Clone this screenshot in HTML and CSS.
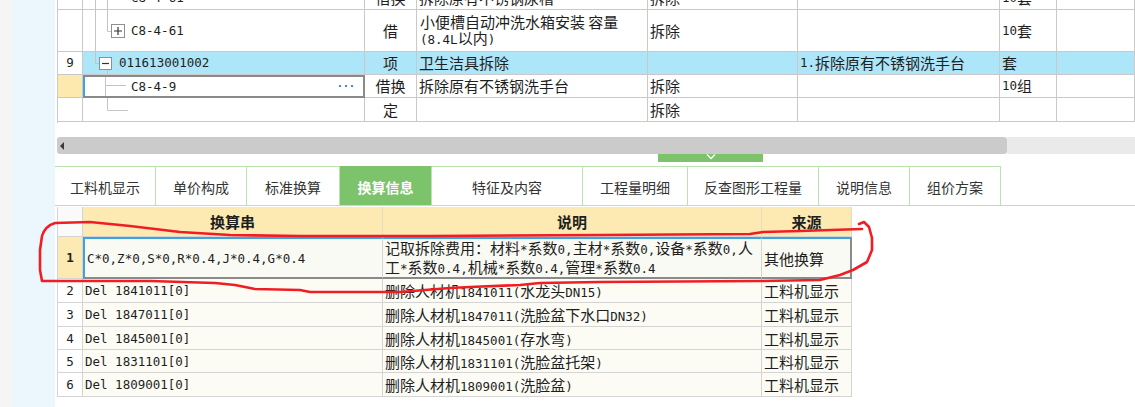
FILE: index.html
```html
<!DOCTYPE html>
<html lang="zh-CN">
<head>
<meta charset="utf-8">
<title>换算信息</title>
<link rel="stylesheet" href="styles.css">
</head>
<body>
<div class="page">
  <div class="side"></div>
  <div class="main">
    <div class="top">
      <div class="trow cut">
        <div class="num"></div>
        <div class="tree">
          <svg class="lines" width="282" height="23"><path d="M12.5 0V23M24.5 0V23" stroke="#c4c4c4" fill="none"/></svg>
          <span class="m code c2">C8-4-61</span>
        </div>
        <div class="typ">借换</div>
        <div>拆除原有不锈钢尿槽</div>
        <div>拆除</div>
        <div></div>
        <div><span class="m">10</span>套</div>
        <div></div>
      </div>
      <div class="trow tall">
        <div class="num"></div>
        <div class="tree">
          <svg class="lines" width="282" height="42"><path d="M12.5 0V42M24.5 0V21.5H28" stroke="#c4c4c4" fill="none"/><rect x="28.5" y="14.5" width="13" height="13" fill="#fff" stroke="#8f8f8f"/><path d="M31 21h8M35 17v8" stroke="#333" stroke-width="1.2"/></svg>
          <span class="m code c2">C8-4-61</span>
        </div>
        <div class="typ">借</div>
        <div class="two"><span class="t">小便槽自动冲洗水箱安装 容量<br><span class="m">(8.4L</span>以内<span class="m">)</span></span></div>
        <div>拆除</div>
        <div></div>
        <div><span class="m">10</span>套</div>
        <div></div>
      </div>
      <div class="trow hl">
        <div class="num"><span class="m">9</span></div>
        <div class="tree">
          <svg class="lines" width="282" height="23"><path d="M12.5 0V11.5H16M24.5 18V23" stroke="#c4c4c4" fill="none"/><rect x="16.5" y="5.5" width="12" height="12" fill="#fff" stroke="#8f8f8f"/><path d="M19 11.5h7" stroke="#333" stroke-width="1.2"/></svg>
          <span class="m code c1">011613001002</span>
        </div>
        <div class="typ">项</div>
        <div>卫生洁具拆除</div>
        <div></div>
        <div><span class="m">1.</span>拆除原有不锈钢洗手台</div>
        <div>套</div>
        <div></div>
      </div>
      <div class="trow">
        <div class="num sel"></div>
        <div class="tree edit">
          <svg class="lines" width="282" height="23"><path d="M22.5 0V23M22.5 10.5H43" stroke="#c4c4c4" fill="none"/></svg>
          <span class="m code c3">C8-4-9</span>
          <svg class="dots" width="14" height="3"><rect x="0" y="0" width="2" height="2" fill="#3a8ee0"/><rect x="6" y="0" width="2" height="2" fill="#3a8ee0"/><rect x="12" y="0" width="2" height="2" fill="#3a8ee0"/></svg>
        </div>
        <div class="typ">借换</div>
        <div>拆除原有不锈钢洗手台</div>
        <div>拆除</div>
        <div></div>
        <div><span class="m">10</span>组</div>
        <div></div>
      </div>
      <div class="trow last">
        <div class="num"></div>
        <div class="tree">
          <svg class="lines" width="282" height="24"><path d="M24.5 0V12.5H45" stroke="#c4c4c4" fill="none"/></svg>
        </div>
        <div class="typ">定</div>
        <div></div>
        <div>拆除</div>
        <div></div>
        <div></div>
        <div></div>
      </div>
    </div>

    <div class="hscroll">
      <div class="thumb"><span class="arrow"></span></div>
      <div class="rest"></div>
    </div>

    <div class="splitter">
      <div class="handle"><svg width="10" height="6"><path d="M1 0.5L5 4.5L9 0.5" stroke="#fff" stroke-width="1.4" fill="none"/></svg></div>
    </div>

    <div class="tabs">
      <div class="tab w1">工料机显示</div>
      <div class="tab w2">单价构成</div>
      <div class="tab w3">标准换算</div>
      <div class="tab w4 active">换算信息</div>
      <div class="tab w5">特征及内容</div>
      <div class="tab w6">工程量明细</div>
      <div class="tab w7">反查图形工程量</div>
      <div class="tab w8">说明信息</div>
      <div class="tab w9">组价方案</div>
    </div>

    <div class="bot">
      <div class="brow head">
        <div class="bn"></div>
        <div class="hc">换算串</div>
        <div class="hc">说明</div>
        <div class="hc">来源</div>
      </div>
      <div class="brow r1">
        <div class="bn"><span class="m">1</span></div>
        <div class="c m">C*0,Z*0,S*0,R*0.4,J*0.4,G*0.4</div>
        <div class="c desc"><span class="t">记取拆除费用：材料<span class="m">*</span>系数<span class="m">0,</span>主材<span class="m">*</span>系数<span class="m">0,</span>设备<span class="m">*</span>系数<span class="m">0,</span>人<br>工<span class="m">*</span>系数<span class="m">0.4,</span>机械<span class="m">*</span>系数<span class="m">0.4,</span>管理<span class="m">*</span>系数<span class="m">0.4</span></span></div>
        <div class="c">其他换算</div>
      </div>
      <div class="brow">
        <div class="bn"><span class="m">2</span></div>
        <div class="c m">Del 1841011[0]</div>
        <div class="c"><span class="t">删除人材机<span class="m">1841011(</span>水龙头<span class="m">DN15)</span></span></div>
        <div class="c">工料机显示</div>
      </div>
      <div class="brow">
        <div class="bn"><span class="m">3</span></div>
        <div class="c m">Del 1847011[0]</div>
        <div class="c"><span class="t">删除人材机<span class="m">1847011(</span>洗脸盆下水口<span class="m">DN32)</span></span></div>
        <div class="c">工料机显示</div>
      </div>
      <div class="brow">
        <div class="bn"><span class="m">4</span></div>
        <div class="c m">Del 1845001[0]</div>
        <div class="c"><span class="t">删除人材机<span class="m">1845001(</span>存水弯<span class="m">)</span></span></div>
        <div class="c">工料机显示</div>
      </div>
      <div class="brow">
        <div class="bn"><span class="m">5</span></div>
        <div class="c m">Del 1831101[0]</div>
        <div class="c"><span class="t">删除人材机<span class="m">1831101(</span>洗脸盆托架<span class="m">)</span></span></div>
        <div class="c">工料机显示</div>
      </div>
      <div class="brow">
        <div class="bn"><span class="m">6</span></div>
        <div class="c m">Del 1809001[0]</div>
        <div class="c"><span class="t">删除人材机<span class="m">1809001(</span>洗脸盆<span class="m">)</span></span></div>
        <div class="c">工料机显示</div>
      </div>
    </div>
  </div>

  <svg class="annot" width="1135" height="407" viewBox="0 0 1135 407">
    <path d="M859 224 L864 222 L869 227 L872 238 L872 250 L867 262 L853 270 L840 275 L820 280 L760 281 L600 282 L540 283 L520 285 L470 287 L450 288 L400 292 L310 292 L300 290 L255 289 L235 285 L215 283 L150 281 L42 281 L40 270 L40 250 L42 236 Q45 226 55 223 L90 222 L130 226 L180 232 L230 235 L300 236 L430 236 L600 235 L750 234 L763 232 L800 231 L862 229" fill="none" stroke="#f01e24" stroke-width="2.6" stroke-linejoin="round" stroke-linecap="round"/>
  </svg>
</div>
</body>
</html>
```

FILE: styles.css
```css
html, body {
  margin: 0;
  padding: 0;
}
body {
  width: 1135px;
  height: 407px;
  overflow: hidden;
  background: #ffffff;
  font-family: "Noto Sans CJK SC", "Noto Sans", sans-serif;
  color: #1e1e1e;
}
.page {
  position: relative;
  display: flex;
  height: 407px;
}
.side {
  width: 55px;
  flex: none;
  background: linear-gradient(to right, #f5f5f5 0, #f5f5f5 12px, #ebf7fc 12px, #ebf7fc 100%);
}
.main {
  flex: 1;
  min-width: 0;
  padding-left: 2px;
  display: flex;
  flex-direction: column;
}
.m {
  font-family: "DejaVu Sans Mono", "Liberation Mono", monospace;
  font-size: 12.5px;
}
.t {
  display: block;
}

/* top grid */
.top {
  height: 123px;
  flex: none;
  overflow: hidden;
  border-left: 1px solid #c9c9c9;
}
.trow {
  display: grid;
  grid-template-columns: 25px 282px 52px 231px 150px 202px 57px 1fr;
  height: 23px;
}
.trow > div {
  box-sizing: border-box;
  border-right: 1px solid #c9c9c9;
  border-bottom: 1px solid #c9c9c9;
  display: flex;
  align-items: center;
  padding-left: 2px;
  font-size: 15px;
  line-height: 16px;
  white-space: nowrap;
  overflow: hidden;
}
.trow.cut { margin-top: -13px; }
.trow.tall { height: 42px; }
.trow.last { height: 24px; }
.trow > .num { justify-content: center; padding-left: 0; }
.trow > .num.sel { background: #fde8ae; }
.trow > .typ { justify-content: center; padding-left: 0; }
.trow > .tree { position: relative; padding-left: 0; }
.trow.hl > div:not(:first-child) { background: #ade6f8; }
.trow > .two { line-height: 16px; padding-left: 3px; }
.lines {
  position: absolute;
  left: 0;
  top: 0;
}
.code { position: relative; }
.c1 { margin-left: 36px; }
.c2 { margin-left: 48px; }
.c3 { margin-left: 46px; }
.trow > .edit {
  border: 2px solid #8a8a8a;
  border-left-color: #3ea2dc;
}
.edit .lines { top: -2px; left: -2px; }
.dots {
  margin-left: auto;
  margin-right: 10px;
  position: relative;
}

/* scrollbar */
.hscroll {
  margin-top: 14px;
  height: 17px;
  display: flex;
  flex: none;
}
.thumb {
  width: 950px;
  background: #cbcbcb;
  border-radius: 3px;
  display: flex;
  align-items: center;
}
.arrow {
  width: 0;
  height: 0;
  margin-left: 3px;
  border-top: 4px solid transparent;
  border-bottom: 4px solid transparent;
  border-right: 4px solid #3a3a3a;
}
.rest {
  flex: 1;
  background: #eaeaea;
}
.splitter {
  height: 12px;
  flex: none;
}
.handle {
  margin-left: 601px;
  width: 105px;
  height: 8px;
  background: #7dc36b;
  display: flex;
  justify-content: center;
  align-items: flex-start;
}

/* tabs */
.tabs {
  display: flex;
  flex: none;
  margin-left: -2px;
  border-bottom: 1px solid #b9e4ab;
}
.tab {
  box-sizing: border-box;
  height: 39px;
  border-top: 1px solid #b9e4ab;
  border-right: 1px solid #b9e4ab;
  display: flex;
  align-items: center;
  justify-content: center;
  font-size: 14px;
  color: #333333;
  padding-top: 1px;
}
.tab.active {
  background: #7dc36b;
  border-top-color: #7dc36b;
  color: #ffffff;
  font-weight: 700;
}
.w1 { width: 101px; }
.w2 { width: 91px; }
.w3 { width: 93px; }
.w4 { width: 92px; }
.w5 { width: 151px; }
.w6 { width: 105px; }
.w7 { width: 131px; }
.w8 { width: 91px; }
.w9 { width: 91px; }

/* bottom grid */
.bot {
  margin-top: 1px;
  width: 795px;
  border-left: 1px solid #d4d4d4;
  flex: none;
}
.brow {
  display: grid;
  grid-template-columns: 25px 300px 379px 90px;
  height: 24px;
}
.brow > div {
  box-sizing: border-box;
  border-right: 1px solid #d4d4d4;
  border-bottom: 1px solid #d4d4d4;
  display: flex;
  align-items: center;
  font-size: 15px;
  white-space: nowrap;
  overflow: hidden;
}
.brow > div.m {
  font-family: "DejaVu Sans Mono", "Liberation Mono", monospace;
  font-size: 12.5px;
}
.brow > .c {
  background: #fcfcf5;
  padding-left: 2px;
}
.brow > .bn {
  justify-content: center;
  background: #ffffff;
}
.brow.head { height: 30px; }
.brow.head > .bn { background: #fafafa; }
.brow.head > .hc {
  background: #fde9b2;
  justify-content: center;
  font-weight: 700;
  border-right-color: #e4dcc0;
}
.brow.r1 { height: 42px; }
.brow.r1 > .bn {
  background: #fde9b2;
  font-weight: 700;
}
.brow.r1 > .bn .m { font-weight: 700; }
.brow.r1 > .c {
  border-top: 2px solid #3ea2dc;
  border-bottom: 2px solid #8a8a8a;
  background: #fafaf4;
}
.brow.r1 > .c:nth-child(2) { border-left: 2px solid #3ea2dc; }
.brow.r1 > .c:nth-child(4) { border-right: 2px solid #8a8a8a; }
.brow.r1 > .desc {
  line-height: 17px;
  white-space: nowrap;
}
.brow:nth-child(5),
.brow:nth-child(6) { height: 23px; }

/* annotation */
.annot {
  position: absolute;
  left: 0;
  top: 0;
  pointer-events: none;
}
```
